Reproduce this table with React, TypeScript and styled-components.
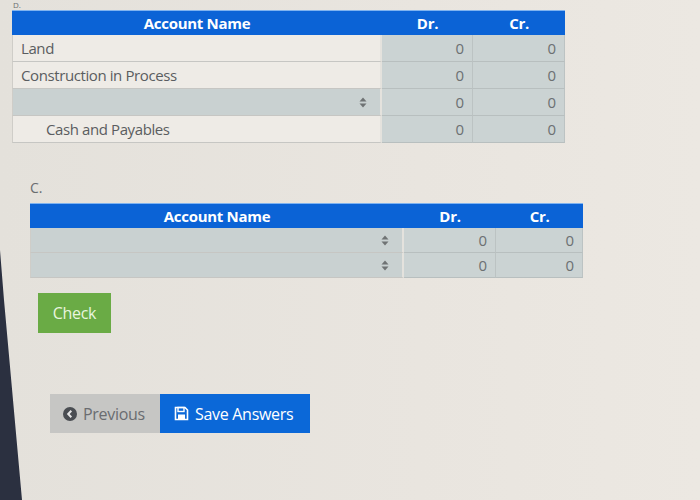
import { createGlobalStyle, styled } from 'styled-components';

type Row = {
  name: string;
  indent?: boolean;
  select?: boolean;
};

const GlobalStyle = createGlobalStyle`
  html, body {
    margin: 0;
    background: #e7e3dd;
    font-family: "Open Sans", "Liberation Sans", sans-serif;
  }
`;

const rowsB: Row[] = [
  { name: 'Land' },
  { name: 'Construction in Process' },
  { name: '', select: true },
  { name: 'Cash and Payables', indent: true },
];

const rowsC: Row[] = [
  { name: '', select: true },
  { name: '', select: true },
];

const Arrows = () => (
  <svg width="8" height="11" viewBox="0 0 8 11">
    <path d="M4 0.5 L7.5 4.5 H0.5 Z" fill="#6f7374" />
    <path d="M4 10.5 L7.5 6.5 H0.5 Z" fill="#6f7374" />
  </svg>
);

const JournalTable = (props: {
  rows: Row[];
  left: number;
  cols: string;
  rowHeight: number;
}) => (
  <Table $left={props.left} $cols={props.cols}>
    <HeadCell>Account Name</HeadCell>
    <HeadCell>Dr.</HeadCell>
    <HeadCell>Cr.</HeadCell>
    {props.rows.map((row, i) => (
      <RowGroup key={i}>
        <NameCell $select={row.select} $indent={row.indent} $h={props.rowHeight}>
          {row.name}
          {row.select && <Arrows />}
        </NameCell>
        <AmountCell $h={props.rowHeight}>0</AmountCell>
        <AmountCell $h={props.rowHeight}>0</AmountCell>
      </RowGroup>
    ))}
  </Table>
);

export default function App() {
  return (
    <Page>
      <GlobalStyle />
      <Bezel />
      <TopLetter>D.</TopLetter>
      <JournalTable rows={rowsB} left={12} cols="370px 91px 92px" rowHeight={27} />
      <SectionLetter>C.</SectionLetter>
      <JournalTable rows={rowsC} left={30} cols="374px 92px 87px" rowHeight={25} />
      <CheckButton>Check</CheckButton>
      <NavBar>
        <PrevButton>
          <svg width="14" height="14" viewBox="0 0 14 14">
            <circle cx="7" cy="7" r="7" fill="#4a4d52" />
            <path d="M8.3 3.8 L5.2 7 L8.3 10.2" stroke="#e6e6e6" strokeWidth="2" fill="none" />
          </svg>
          Previous
        </PrevButton>
        <SaveButton>
          <svg width="15" height="15" viewBox="0 0 15 15">
            <path d="M1.5 1.5 H11 L13.5 4 V13.5 H1.5 Z" stroke="#fff" strokeWidth="1.6" fill="none" />
            <rect x="4" y="1.5" width="6" height="4" stroke="#fff" strokeWidth="1.4" fill="none" />
            <rect x="4" y="8.5" width="7" height="5" fill="#fff" />
          </svg>
          Save Answers
        </SaveButton>
      </NavBar>
    </Page>
  );
}

const Page = styled.div`
  position: relative;
  width: 700px;
  height: 500px;
  overflow: hidden;
  background: linear-gradient(90deg, #e4e1db 0%, #e9e5df 60%, #ece8e2 100%);
`;

const Bezel = styled.div`
  position: absolute;
  left: 0;
  top: 0;
  width: 26px;
  height: 500px;
  background: #2b3040;
  clip-path: polygon(0 250px, 4px 300px, 22px 500px, 0 500px);
`;

const TopLetter = styled.div`
  height: 10px;
  margin-left: 13px;
  font-size: 8px;
  line-height: 10px;
  color: #6a6d70;
`;

const SectionLetter = styled.div`
  margin: 36px 0 6px 30px;
  font-size: 14px;
  line-height: 18px;
  color: #6a6d70;
`;

const Table = styled.div<{ $left: number; $cols: string }>`
  display: grid;
  grid-template-columns: ${(p) => p.$cols};
  margin-left: ${(p) => p.$left}px;
  width: max-content;
`;

const HeadCell = styled.div`
  background: #0b63d6;
  color: #fff;
  font-weight: 700;
  font-size: 15px;
  height: 24px;
  line-height: 24px;
  text-align: center;
  border-top: 1px solid #7fb3f0;
  letter-spacing: -0.3px;
`;

const RowGroup = styled.div`
  display: contents;
`;

const NameCell = styled.div<{ $select?: boolean; $indent?: boolean; $h: number }>`
  display: flex;
  align-items: center;
  justify-content: ${(p) => (p.$select ? 'flex-end' : 'flex-start')};
  height: ${(p) => p.$h}px;
  box-sizing: border-box;
  padding: 0 ${(p) => (p.$select ? '13px' : '0')} 0 ${(p) => (p.$indent ? '33px' : '8px')};
  background: ${(p) => (p.$select ? '#c9d1d1' : '#eeebe6')};
  border-bottom: 1px solid #c6c6c3;
  border-left: 1px solid #cfcdc8;
  border-right: 2px solid #e4e2dd;
  color: #5a5d60;
  font-size: 15px;
  letter-spacing: -0.4px;
`;

const AmountCell = styled.div<{ $h: number }>`
  height: ${(p) => p.$h}px;
  box-sizing: border-box;
  background: #cbd3d3;
  border-bottom: 1px solid #b8bfbf;
  border-right: 1px solid #bcc3c3;
  color: #6c7072;
  font-size: 15px;
  line-height: ${(p) => p.$h}px;
  text-align: right;
  padding-right: 8px;
`;

const CheckButton = styled.button`
  display: block;
  margin: 15px 0 0 38px;
  width: 73px;
  height: 40px;
  border: none;
  background: #6aab45;
  color: #e9f5df;
  font-family: inherit;
  font-size: 16px;
  letter-spacing: -0.3px;
`;

const NavBar = styled.div`
  display: flex;
  margin: 61px 0 0 50px;
`;

const PrevButton = styled.button`
  display: flex;
  align-items: center;
  gap: 6px;
  width: 110px;
  height: 39px;
  padding: 0 0 0 13px;
  border: none;
  background: #c6c6c4;
  color: #6a6c70;
  font-family: inherit;
  font-size: 16px;
  letter-spacing: -0.3px;
`;

const SaveButton = styled.button`
  display: flex;
  align-items: center;
  gap: 6px;
  width: 150px;
  height: 39px;
  padding: 0 0 0 14px;
  border: none;
  background: #0b68d8;
  color: #fff;
  font-family: inherit;
  font-size: 16px;
  letter-spacing: -0.3px;
`;
